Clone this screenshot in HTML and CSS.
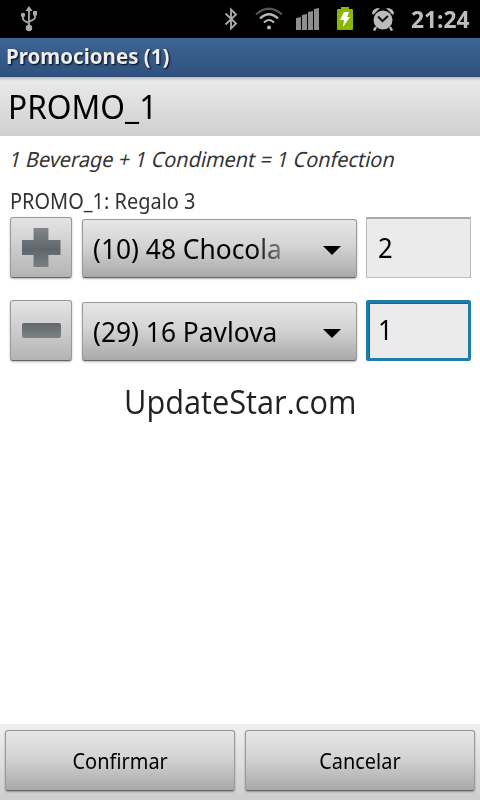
FILE: index.html
```html
<!DOCTYPE html>
<html lang="es">
<head>
  <meta charset="UTF-8">
  <meta name="viewport" content="width=device-width, initial-scale=1.0">
  <title>Promociones</title>
  <link rel="stylesheet" href="styles.css">
</head>
<body>

  <!-- Status bar -->
  <div class="status-bar">
    <svg class="usb" width="18" height="26" viewBox="0 0 18 26" fill="none" stroke="#aaa" stroke-width="1.800">
      <path d="M9 4v18M3 9v4q0 1.500 6 4M15 8v3.500q0 2-6 4"/>
      <path d="M9 0l3.500 5h-7zM13 5h4v4.500h-4z" fill="#aaa" stroke="none"/>
      <circle cx="3" cy="9" r="2.200" fill="#aaa" stroke="none"/>
      <circle cx="9" cy="22" r="3.200" fill="#aaa" stroke="none"/>
    </svg>
    <svg class="bluetooth" width="14" height="24" viewBox="0 0 14 24" fill="none" stroke="#aaa" stroke-width="1.900">
      <path d="M1.500 6.500L12 16.500 7 21.500V2.500l5 5L1.500 17.500"/>
    </svg>
    <svg class="wifi" width="28" height="24" viewBox="0 0 28 24" fill="none" stroke="#bbb" stroke-width="2.200">
      <path d="M1 7.500Q14-4 27 7.500" stroke="#555"/>
      <path d="M5 11.500Q14 3 23 11.500"/>
      <path d="M9 15.500Q14 10.500 19 15.500"/>
      <circle cx="14" cy="20.500" r="2" fill="#bbb" stroke="none"/>
    </svg>
    <svg class="signal" width="24" height="22" viewBox="0 0 24 22" fill="#8e8e8e">
      <path d="M0 10l5-1v13H0zM6 7l5-1v16H6zM12 4l5-1v19h-5zM18 1l5-1v22h-5z"/>
    </svg>
    <svg class="battery" width="18" height="24" viewBox="0 0 18 24">
      <path d="M2 2h3V0h8v2h3q1 0 1 1v19q0 1-1 1H2q-1 0-1-1V3q0-1 1-1z" fill="#8ab800"/>
      <path d="M8 5h5l-2 5h3l-7 10 1-7H4z" fill="#fff"/>
    </svg>
    <svg class="alarm" width="24" height="24" viewBox="0 0 24 24" fill="#bbb">
      <circle cx="12" cy="13" r="9.500"/>
      <path d="M1 6q1-5 8-5L2 8zM23 6q-1-5-8-5l7 7z"/>
      <path d="M5 20l-2 3.500M19 20l2 3.500" stroke="#bbb" stroke-width="2.500"/>
      <path d="M7 9.500l4.500 4.500L17 9" fill="none" stroke="#111" stroke-width="2"/>
    </svg>
    <span class="clock"><span class="text">21:24</span></span>
  </div>

  <div class="title-bar"><span class="text">Promociones (1)</span></div>
  <h1 class="promo-name"><span class="text">PROMO_1</span></h1>

  <div class="content">
    <p class="rule"><span class="text">1 Beverage + 1 Condiment = 1 Confection</span></p>
    <p class="gift"><span class="text">PROMO_1: Regalo 3</span></p>

    <div class="row">
      <button class="btn step" aria-label="+"><span class="plus"></span></button>
      <button class="btn spinner">
        <span class="label fade"><span class="text">(10) 48 Chocola</span></span>
        <span class="arrow"></span>
      </button>
      <div class="qty"><span class="text">2</span></div>
    </div>

    <div class="row">
      <button class="btn step" aria-label="-"><span class="minus"></span></button>
      <button class="btn spinner">
        <span class="label"><span class="text">(29) 16 Pavlova</span></span>
        <span class="arrow"></span>
      </button>
      <div class="qty focused"><span class="text">1</span></div>
    </div>

    <div class="watermark"><span class="text">UpdateStar.com</span></div>
  </div>

  <footer>
    <button class="btn action confirm"><span class="text">Confirmar</span></button>
    <button class="btn action cancel"><span class="text">Cancelar</span></button>
  </footer>

</body>
</html>
```
FILE: styles.css
```css
* {
  box-sizing: border-box;
}
body {
  margin: 0;
  width: 480px;
  height: 800px;
  display: flex;
  flex-direction: column;
  background-color: #fff;
  color: #000;
  font-family: "Noto Sans", sans-serif;
  overflow: hidden;
}
h1, p {
  margin: 0;
  font-weight: normal;
}
.text {
  display: inline-block;
  white-space: nowrap;
  transform: scaleX(0.95);
  transform-origin: left;
}
.status-bar {
  height: 38px;
  flex: none;
  display: flex;
  align-items: center;
  background-color: #000;
}
.usb {
  margin-left: 20px;
}
.bluetooth {
  margin-left: 186px;
}
.wifi {
  margin-left: 17px;
}
.signal {
  margin-left: 13px;
}
.battery {
  margin-left: 16px;
}
.alarm {
  margin-left: 17px;
}
.clock {
  margin-left: 16px;
  font-size: 24px;
  font-weight: bold;
  line-height: 38px;
  height: 38px;
  color: #bebebe;
}
.title-bar {
  height: 39px;
  flex: none;
  padding-left: 6px;
  border-bottom: 1px solid #2b4970;
  background: linear-gradient(#3e6594, #2f517f);
  color: #eee;
  font-size: 21px;
  font-weight: bold;
  line-height: 36px;
  text-shadow: 1px 1px 2px #000;
}
.title-bar .text, .label .text {
  transform: scaleX(0.976);
}
.promo-name {
  height: 59px;
  flex: none;
  padding-left: 8px;
  background: linear-gradient(#bbb, #e9e9e9 4px, #d0d0d0);
  font-size: 33px;
  line-height: 60px;
}
.promo-name .text {
  transform: scaleX(0.96);
}
.content {
  flex: 1;
  padding: 0 9px 0 10px;
}
.rule, .gift {
  font-size: 21px;
  color: #333;
}
.rule {
  height: 47px;
  line-height: 47px;
}
.rule .text {
  transform: scaleX(0.947) skewX(-14deg);
}
.gift {
  height: 34px;
  line-height: 37px;
}
.row {
  height: 61px;
  margin-bottom: 22px;
  display: flex;
  align-items: flex-end;
}
.btn {
  padding: 0;
  border: 1px solid #999;
  border-bottom-color: #666;
  border-radius: 3px;
  background: linear-gradient(#e6e6e6, #d4d4d4 45%, #a9a9a9);
  box-shadow: 0 1px 2px rgba(0, 0, 0, 0.3);
  color: #000;
  font-family: inherit;
}
.step {
  width: 62px;
  height: 61px;
  margin-right: 10px;
  display: flex;
  align-items: center;
  justify-content: center;
  background: linear-gradient(#e4e4e4, #b4b4b4);
}
.plus, .minus {
  width: 39px;
}
.plus {
  height: 39px;
  background: linear-gradient(#80868a, #5f666b 55%, #798084);
  clip-path: polygon(31% 0, 69% 0, 69% 31%, 100% 31%, 100% 69%, 69% 69%, 69% 100%, 31% 100%, 31% 69%, 0 69%, 0 31%, 31% 31%);
}
.minus {
  height: 15px;
  border-radius: 2px;
  background: linear-gradient(#60676a, #7d8385);
}
.spinner {
  width: 275px;
  height: 59px;
  margin-right: 9px;
  padding: 0 15px 0 10px;
  display: flex;
  align-items: center;
  justify-content: space-between;
  font-size: 27px;
}
.label {
  width: 190px;
  overflow: hidden;
  text-align: left;
}
.fade {
  mask-image: linear-gradient(to right, #000 160px, transparent 206px);
}
.arrow {
  margin-top: 3px;
  border: 9px solid transparent;
  border-top-color: #000;
  border-bottom: 0;
}
.qty {
  width: 105px;
  height: 61px;
  padding-left: 11px;
  border: 1px solid #bbb;
  border-top: 2px solid #aaa;
  background-color: #ebebeb;
  font-size: 27px;
  line-height: 57px;
}
.focused {
  padding-left: 9px;
  border: 3px solid #1f7dac;
  border-radius: 2px;
  box-shadow: inset 1px 1px 0 #456;
  line-height: 54px;
}
.watermark {
  padding-left: 114px;
  font-family: "Open Sans", sans-serif;
  font-size: 32px;
  line-height: 38px;
  color: #222;
}
.watermark .text {
  transform: scaleX(0.96);
}
footer {
  height: 76px;
  flex: none;
  display: flex;
  gap: 10px;
  padding: 6px 5px;
  background: linear-gradient(#f0f0f0, #cdcdcd);
}
.action {
  width: 230px;
  height: 61px;
  font-size: 21px;
}
.action .text {
  transform-origin: center;
}
```
